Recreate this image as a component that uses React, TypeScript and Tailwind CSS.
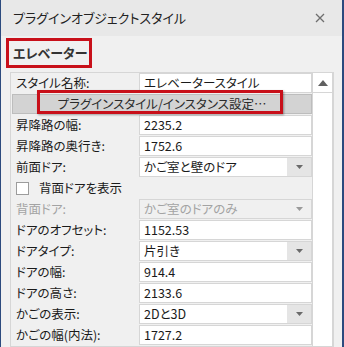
import { FC } from 'react';

type Row =
  | { kind: 'text'; label: string; value: string }
  | { kind: 'select'; label: string; value: string; disabled?: boolean }
  | { kind: 'button'; label: string }
  | { kind: 'check'; label: string };

const rows: Row[] = [
  { kind: 'text', label: 'スタイル名称:', value: 'エレベータースタイル' },
  { kind: 'button', label: 'プラグインスタイル/インスタンス設定…' },
  { kind: 'text', label: '昇降路の幅:', value: '2235.2' },
  { kind: 'text', label: '昇降路の奥行き:', value: '1752.6' },
  { kind: 'select', label: '前面ドア:', value: 'かご室と壁のドア' },
  { kind: 'check', label: '背面ドアを表示' },
  { kind: 'select', label: '背面ドア:', value: 'かご室のドアのみ', disabled: true },
  { kind: 'text', label: 'ドアのオフセット:', value: '1152.53' },
  { kind: 'select', label: 'ドアタイプ:', value: '片引き' },
  { kind: 'text', label: 'ドアの幅:', value: '914.4' },
  { kind: 'text', label: 'ドアの高さ:', value: '2133.6' },
  { kind: 'select', label: 'かごの表示:', value: '2Dと3D' },
  { kind: 'text', label: 'かごの幅(内法):', value: '1727.2' },
];

const Arrow: FC<{ light?: boolean }> = ({ light }) => (
  <svg width="7" height="4" viewBox="0 0 7 4">
    <path d="M0 0h7L3.5 4z" fill={light ? '#9a9a9a' : '#6a6a6a'} />
  </svg>
);

const GridRow: FC<{ row: Row }> = ({ row }) => {
  if (row.kind === 'button') {
    return (
      <div className="relative h-[21px]">
        <div className="ml-[1px] flex h-[20px] w-[300px] items-center justify-center border border-[#bdbdbd] bg-[#d3d3d3] text-[#2a2a2a]">
          {row.label}
        </div>
        <div className="absolute left-[26px] top-[-4px] h-[24px] w-[246px] border-[3px] border-[#c8101a] shadow-[1px_1px_2px_rgba(0,0,0,0.35)]" />
      </div>
    );
  }
  if (row.kind === 'check') {
    return (
      <div className="flex h-[21px] items-center pl-[5px]">
        <div className="h-[13px] w-[13px] border border-[#9c9c9c] bg-white" />
        <span className="ml-[10px] text-[#1a1a1a]">{row.label}</span>
      </div>
    );
  }
  const disabled = row.kind === 'select' && row.disabled;
  return (
    <div className="flex h-[21px]">
      <div className={`w-[128px] whitespace-nowrap pl-[5px] leading-[20px] ${disabled ? 'text-[#a3a3a3]' : 'text-[#1a1a1a]'}`}>
        {row.label}
      </div>
      <div
        className={`flex h-[20px] w-[173px] border border-[#d6d6d6] ${disabled ? 'bg-[#f0f0f0] text-[#a3a3a3]' : 'bg-white text-[#1a1a1a]'}`}
      >
        <span className="flex-1 whitespace-nowrap pl-[4px] leading-[18px]">{row.value}</span>
        {row.kind === 'select' && (
          <div
            className={`flex w-[24px] items-center justify-center ${disabled ? '' : 'bg-[#e5e5e5]'}`}
          >
            <Arrow light={disabled} />
          </div>
        )}
      </div>
    </div>
  );
};

const App: FC = () => {
  return (
    <div className="flex h-[347px] w-[344px] flex-col overflow-hidden border-l border-r-2 border-[#2c4a7e] bg-[#f0f0f0] font-['Noto_Sans_CJK_JP',sans-serif] text-[12.5px] [font-feature-settings:'palt']">
      <div className="flex h-[36px] shrink-0 items-center justify-between bg-[#e8e8e8] pl-[12px] pr-[17px] text-[#222]">
        <span className="text-[13px]">プラグインオブジェクトスタイル</span>
        <svg width="10" height="10" viewBox="0 0 10 10">
          <path d="M1 1l8 8M9 1l-8 8" stroke="#6e6e6e" strokeWidth="1.3" />
        </svg>
      </div>
      <div className="ml-[5px] mt-[2px] flex h-[30px] w-[86px] items-center whitespace-nowrap border-[3px] border-[#c8101a] pl-[4px] text-[13px] font-bold text-[#333]">
        エレベーター
      </div>
      <div className="ml-[9px] mt-[4px] flex w-[324px] border border-[#d6d6d6]">
        <div className="flex w-[301px] flex-col">
          {rows.map((r, i) => (
            <GridRow key={i} row={r} />
          ))}
        </div>
        <div className="flex w-[21px] flex-col border-x border-[#d6d6d6] bg-white">
          <div className="flex h-[20px] items-center justify-center border-b border-[#d6d6d6]">
            <svg width="10" height="6" viewBox="0 0 10 6">
              <path d="M0 6L5 0l5 6z" fill="#606060" />
            </svg>
          </div>
        </div>
      </div>
    </div>
  );
};

export default App;
